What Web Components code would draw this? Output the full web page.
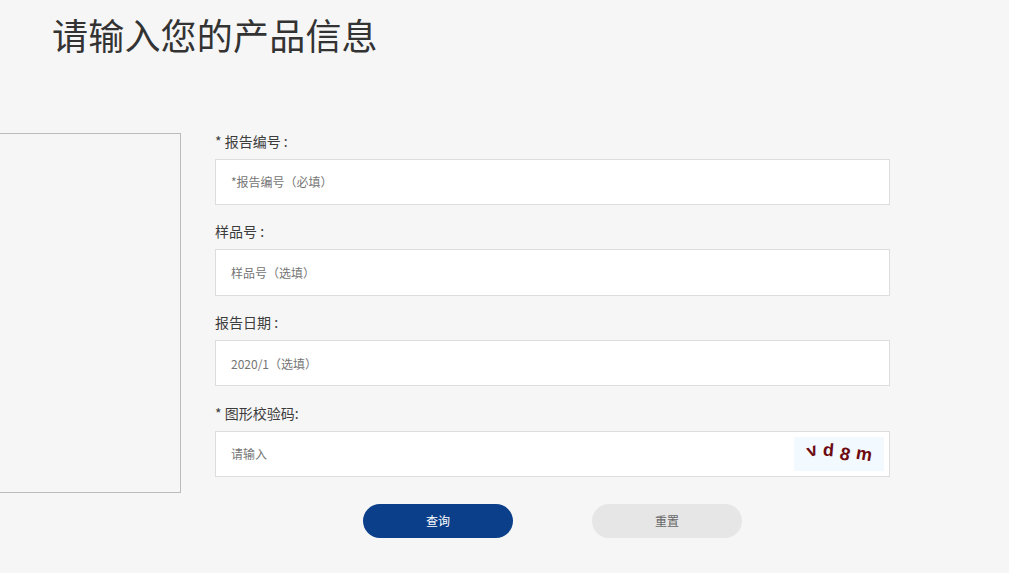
<!DOCTYPE html>
<html lang="zh">
<head>
<meta charset="utf-8">
<title>产品信息</title>
<style>
  html, body { margin: 0; height: 100%; overflow: hidden; }
  body { background: #f6f6f6; color: #333; font-family: "Noto Sans CJK SC", "Liberation Sans", sans-serif; }
</style>
</head>
<body>
<query-page>
  <span slot="title">请输入您的产品信息</span>
  <form-field label="* 报告编号 :">*报告编号（必填）</form-field>
  <form-field label="样品号 :">样品号（选填）</form-field>
  <form-field label="报告日期 :">2020/1（选填）</form-field>
  <form-field label="* 图形校验码:">请输入<captcha-image slot="extra" code="vd8m"></captcha-image></form-field>
  <pill-button slot="actions" kind="primary">查询</pill-button>
  <pill-button slot="actions">重置</pill-button>
</query-page>

<script>
class QueryPage extends HTMLElement {
  constructor () {
    super()
    this.attachShadow({ mode: 'open' }).innerHTML = `
<style>
  :host { display: block; }
  h1 {
    margin: 0;
    padding: 8px 0 0 52px;
    height: 133px;
    box-sizing: border-box;
    font-size: 36px;
    line-height: 52px;
    letter-spacing: 0.2px;
    font-weight: 400;
    color: #333;
  }
  .body { display: flex; gap: 34px; }
  .panel {
    flex: none;
    width: 181px;
    height: 360px;
    box-sizing: border-box;
    border: 1px solid #bbb;
    border-left: 0;
  }
  .form { flex: none; width: 675px; display: flex; flex-direction: column; }
  .fields { display: flex; flex-direction: column; gap: 18.45px; margin-top: -0.2px; }
  .actions { display: flex; justify-content: center; gap: 79px; margin-top: 27px; }
</style>
<h1><slot name="title"></slot></h1>
<div class="body">
  <div class="panel"></div>
  <div class="form">
    <div class="fields"><slot></slot></div>
    <div class="actions"><slot name="actions"></slot></div>
  </div>
</div>`
  }
}

class FormField extends HTMLElement {
  constructor () {
    super()
    this.attachShadow({ mode: 'open' }).innerHTML = `
<style>
  :host { display: block; }
  label { display: block; height: 26px; font-size: 14px; line-height: 16px; color: #3c3c3c; white-space: pre; }
  .box {
    display: flex;
    align-items: center;
    justify-content: space-between;
    height: 46.2px;
    box-sizing: border-box;
    padding: 0 5px 0 15px;
    background: #fff;
    border: 1px solid #ddd;
    font-size: 12px;
    color: #757575;
  }
</style>
<label></label>
<div class="box"><span><slot></slot></span><slot name="extra"></slot></div>`
    this.shadowRoot.querySelector('label').textContent = this.getAttribute('label')
  }
}

class CaptchaImage extends HTMLElement {
  constructor () {
    super()
    this.attachShadow({ mode: 'open' }).innerHTML = `
<style>
  :host {
    display: flex;
    align-items: center;
    gap: 6px;
    width: 90px;
    height: 34px;
    box-sizing: border-box;
    padding-left: 13px;
    background: #f3faff;
    color: #6e0b12;
    font: 700 18px "Liberation Sans", sans-serif;
  }
  span { display: inline-block; }
</style>`
    // each letter is turned and dropped a little, like the server-drawn image
    const glyphs = [[-20, -3], [5, -3], [14, 1], [10, 1]]
    ;[...this.getAttribute('code')].forEach((ch, i) => {
      const $c = document.createElement('span')
      $c.textContent = ch
      $c.style.transform = `translateY(${glyphs[i][1]}px) rotate(${glyphs[i][0]}deg)`
      this.shadowRoot.appendChild($c)
    })
  }
}

class PillButton extends HTMLElement {
  constructor () {
    super()
    this.attachShadow({ mode: 'open' }).innerHTML = `
<style>
  :host {
    display: flex;
    align-items: center;
    justify-content: center;
    width: 150px;
    height: 34px;
    border-radius: 17px;
    background: #e6e6e6;
    color: #666;
    font-size: 12px;
    cursor: pointer;
  }
  :host([kind="primary"]) { background: #0b3f8a; color: #fff; }
</style>
<slot></slot>`
  }
}

customElements.define('query-page', QueryPage)
customElements.define('form-field', FormField)
customElements.define('captcha-image', CaptchaImage)
customElements.define('pill-button', PillButton)
</script>
</body>
</html>
